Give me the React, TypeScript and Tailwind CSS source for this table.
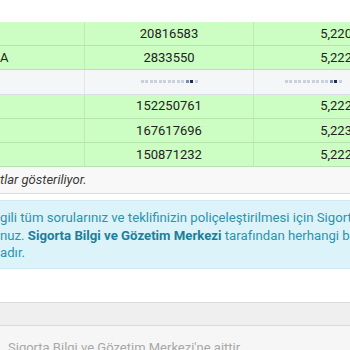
import React from "react";

type Row = { name: string; shown: string; count: string; ratio: string };

const rows: Row[] = [
  { name: "ANKARA SİGORTA", shown: "", count: "20816583", ratio: "5,220" },
  { name: "AXA SİGORT", shown: "A", count: "2833550", ratio: "5,222" },
];

const rowsAfter: Row[] = [
  { name: "ALLIANZ SİGORTA", shown: "", count: "152250761", ratio: "5,222" },
  { name: "ANADOLU SİGORTA", shown: "", count: "167617696", ratio: "5,223" },
  { name: "HDI SİGORTA", shown: "", count: "150871232", ratio: "5,222" },
];

const dotTones = [
  "bg-[#c9d1e1]", "bg-[#c9d1e1]", "bg-[#c9d1e1]", "bg-[#c9d1e1]", "bg-[#c9d1e1]",
  "bg-[#c9d1e1]", "bg-[#c9d1e1]", "bg-[#c9d1e1]", "bg-[#c9d1e1]", "bg-[#c9d1e1]",
  "bg-[#7d8cab]", "bg-[#1c2d52]", "bg-[#c9d1e1]",
];

function Dots() {
  return (
    <div className="flex gap-[1.5px]">
      {dotTones.map((t, i) => (
        <span key={i} className={`h-[3px] w-[3px] ${t}`} />
      ))}
    </div>
  );
}

// text whose start runs off the left edge of the scrolled page
function Clip({ hidden, shown }: { hidden: string; shown: React.ReactNode }) {
  return (
    <div className="flex whitespace-nowrap">
      <div className="flex w-0 shrink-0 justify-end">{hidden}</div>
      <div>{shown}</div>
    </div>
  );
}

function DataRow({ row }: { row: Row }) {
  return (
    <div className="grid h-[24.2px] grid-cols-[85px_169px_118px] border-b border-[#b9e2b1] bg-[#ccfdc3] text-[13px] text-[#222]">
      <div className="flex items-center overflow-visible border-r border-[#c3e8bb]">
        <Clip hidden={row.name} shown={row.shown} />
      </div>
      <div className="flex items-center justify-center border-r border-[#c3e8bb]">{row.count}</div>
      <div className="flex items-center justify-end pr-[20px]">{row.ratio}</div>
    </div>
  );
}

function LoadingRow() {
  return (
    <div className="grid h-[24.2px] grid-cols-[85px_169px_118px] border-b border-[#d9dee3] bg-[#f4f6f8]">
      <div className="border-r border-[#e3e7eb]" />
      <div className="flex items-center justify-center border-r border-[#e3e7eb]">
        <Dots />
      </div>
      <div className="flex items-center justify-center">
        <Dots />
      </div>
    </div>
  );
}

export default function App() {
  return (
    <div
      className="h-[350px] w-[350px] overflow-hidden bg-white"
      style={{ fontFamily: "Roboto, 'Noto Sans', sans-serif" }}
    >
      <div className="h-[22px]" />

      <div className="w-[372px]">
        {rows.map((r) => (
          <DataRow key={r.count} row={r} />
        ))}
        <LoadingRow />
        {rowsAfter.map((r) => (
          <DataRow key={r.count} row={r} />
        ))}
      </div>

      <div className="flex h-[27px] items-center border-b border-[#dcdcdc] bg-[#f8f8f8] text-[13px] italic text-[#3a3a3a]">
        <Clip hidden="Güncel fiya" shown="tlar gösteriliyor." />
      </div>

      <div className="mt-[6px] border-y border-[#cbeaf3] bg-[#dcf3fa] pb-[6px] pt-[8px] text-[13.2px] leading-[17.5px] text-[#2b93ad]">
        <Clip
          hidden="Teklifinizle il"
          shown="gili tüm sorularınız ve teklifinizin poliçeleştirilmesi için Sigorta Şirketine"
        />
        <Clip
          hidden="başvuru"
          shown={
            <>
              nuz. <b className="font-bold text-[#1c7f9a]">Sigorta Bilgi ve Gözetim Merkezi</b> tarafından herhangi bir
            </>
          }
        />
        <Clip hidden="sorumluluk bulunmamakt" shown="adır." />
      </div>

      <div className="h-[33px]" />

      <div className="h-[24px] border-y border-[#dadada] bg-[#efefef]" />

      <div className="bg-[#f6f6f6] pl-[8px] pt-[13px] text-[13px] leading-[17.5px] text-[#a8a8a8]">
        Sigorta Bilgi ve Gözetim Merkezi'ne aittir.
      </div>
    </div>
  );
}
